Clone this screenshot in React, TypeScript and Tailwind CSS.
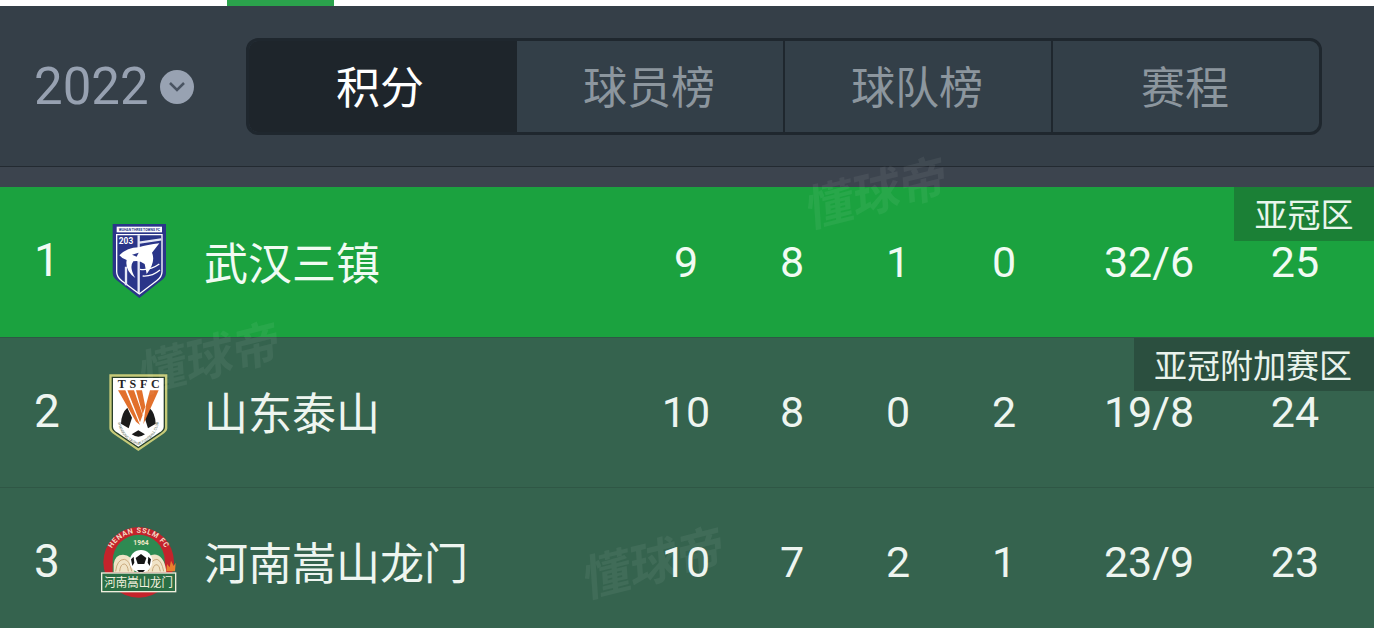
import React from 'react';

const cjk = "font-['Roboto','Noto_Sans_CJK_SC',sans-serif]";

function WuhanLogo() {
  return (
    <svg width="100" height="100" viewBox="0 0 300 300" className="ml-[2px] mb-[5px] shrink-0">
      <path d="M68 42 H228 V190 Q228 205 205 218 L148 264 L90 218 Q68 205 68 190 Z" fill="#2a3589" />
      <rect x="80" y="50" width="136" height="17" fill="#fff" />
      <text x="148" y="63" textAnchor="middle" fontSize="13" fontWeight="700" fill="#2a3589" fontFamily="Roboto, sans-serif" textLength="124" lengthAdjust="spacingAndGlyphs">WUHAN THREE TOWNS FC</text>
      <path d="M80 74 H216 V185 Q216 200 200 212 L148 252 L95 212 Q80 200 80 185 Z" fill="none" stroke="#fff" strokeWidth="4" />
      <text x="108" y="103" textAnchor="middle" fontSize="25" fontWeight="700" fill="#fff" fontFamily="Roboto, sans-serif">203</text>
      <path d="M146 76 V250 M108 170 V226 M148 98 L214 88" stroke="#e4e7f5" strokeWidth="7" fill="none" />
      <path d="M88 136 Q112 112 146 112 Q172 104 208 100 L186 128 Q198 156 170 192 L164 162 Q148 150 130 154 Q116 172 136 204 Q104 182 110 150 Q98 148 88 136 Z" fill="#fff" />
      <path d="M126 134 L146 128 L140 140 Z" fill="#2a3589" />
      <path d="M150 178 Q180 182 208 162 M158 198 Q186 200 210 180" stroke="#fff" strokeWidth="4" fill="none" />
    </svg>
  );
}

function TaishanLogo() {
  return (
    <svg width="100" height="95" viewBox="0 0 300 285" className="ml-[2px] shrink-0">
      <path d="M58 28 H232 V190 Q232 200 215 210 L145 258 L75 210 Q58 200 58 190 Z" fill="#c6ca78" />
      <path d="M65 35 H225 V187 Q225 197 210 206 L145 250 L80 206 Q65 197 65 187 Z" fill="#28402c" />
      <path d="M69 39 H221 V185 Q221 195 207 203 L145 245 L83 203 Q69 195 69 185 Z" fill="#fff" />
      <text x="146" y="68" textAnchor="middle" fontSize="36" fontWeight="700" fill="#222" fontFamily="'Liberation Serif', serif" textLength="126">TSFC</text>
      <circle cx="145" cy="165" r="52" fill="#fff" />
      <path d="M112 128 Q94 144 93 176 L116 190 L126 158 Z M178 128 Q196 144 197 176 L174 190 L164 158 Z M125 208 L145 196 L165 208 Q145 222 125 208 Z" fill="#1b1b1b" />
      <path d="M84 76 H106 L150 180 L138 170 Z M112 76 H132 L158 150 L150 172 Z M138 76 H156 L166 125 L158 148 Z M206 76 H180 L168 120 L160 178 Z" fill="#e2702c" />
      <path id="ts-arc" d="M84 170 Q90 220 145 240 Q200 220 206 170" fill="none" />
      <text fontSize="11" fill="#5a6a55" fontFamily="Roboto, sans-serif">
        <textPath href="#ts-arc" startOffset="50%" textAnchor="middle">SHANDONG TAISHAN FOOTBALL CLUB</textPath>
      </text>
    </svg>
  );
}

function HenanLogo() {
  return (
    <svg width="100" height="95" viewBox="0 0 300 285" className="ml-[4px] mb-[3px] shrink-0">
      <circle cx="143" cy="145" r="106" fill="#c4232b" />
      <path d="M65 175 V140 A78 78 0 0 1 221 140 V175 Z" fill="#2e8a52" />
      <path d="M68 175 V150 Q72 122 96 122 Q122 124 130 150 V175 Z M162 175 V150 Q172 118 196 122 Q222 130 226 175 Z" fill="#f0e3c6" />
      <path d="M74 172 Q78 136 100 136 Q116 138 122 172 M86 172 Q88 150 100 150 Q110 152 112 172 M172 172 Q178 136 198 136 Q212 140 218 172 M184 172 Q186 152 198 152 Q206 154 208 172" fill="none" stroke="#c9a97c" strokeWidth="3" />
      <path d="M226 172 L228 150 L236 160 L240 140 L248 156 L254 146 L252 172 Z" fill="#e8802e" />
      <circle cx="150" cy="142" r="34" fill="#fff" />
      <path d="M150 120 L166 132 L160 150 H140 L134 132 Z M120 136 L128 128 L130 146 L124 156 Z M180 136 L172 128 L170 146 L176 156 Z M138 168 H162 L156 175 H144 Z" fill="#151515" />
      <rect x="32" y="177" width="222" height="56" fill="#2a6e44" stroke="#efeedd" strokeWidth="4" />
      <text x="143" y="219" textAnchor="middle" fontSize="36" fill="#f4f1df" fontFamily="'Noto Sans CJK SC', sans-serif" textLength="206" lengthAdjust="spacingAndGlyphs">河南嵩山龙门</text>
      <text x="150" y="92" textAnchor="middle" fontSize="20" fontWeight="700" fill="#f0e8c8" fontFamily="Roboto, sans-serif">1964</text>
      <path id="hn-arc" d="M52 135 A92 92 0 0 1 234 135" fill="none" />
      <text fontSize="22" fontWeight="700" fill="#f3d8c4" fontFamily="Roboto, sans-serif" letterSpacing="2">
        <textPath href="#hn-arc" startOffset="50%" textAnchor="middle">HENAN SSLM FC</textPath>
      </text>
    </svg>
  );
}

function Watermark({ className }: { className: string }) {
  return (
    <span className={`absolute -rotate-[14deg] -skew-x-[10deg] text-[48px] font-bold leading-none text-white/[0.06] ${className}`}>
      懂球帝
    </span>
  );
}

const rows = [
  { rank: 1, name: '武汉三镇', logo: <WuhanLogo />, stats: ['9', '8', '1', '0', '32/6', '25'] },
  { rank: 2, name: '山东泰山', logo: <TaishanLogo />, stats: ['10', '8', '0', '2', '19/8', '24'] },
  { rank: 3, name: '河南嵩山龙门', logo: <HenanLogo />, stats: ['10', '7', '2', '1', '23/9', '23'] },
];

const statWidths = ['w-[106px]', 'w-[106px]', 'w-[106px]', 'w-[106px]', 'w-[184px]', 'w-[108px]'];

export default function App() {
  const tabs = ['球员榜', '球队榜', '赛程'];

  return (
    <div className={`relative h-[628px] w-[1374px] overflow-hidden bg-[#35634e] ${cjk}`}>
      {/* top strip */}
      <div className="h-[6px] bg-white pl-[227px]">
        <div className="h-full w-[107px] bg-[#2ba24c]" />
      </div>

      {/* season + tabs */}
      <div className="flex h-[161px] items-start border-b border-[#232a31] bg-[#353f48] pl-[34px] pt-[32px]">
        <div className="flex h-[97px] w-[212px] items-center">
          <span className="text-[51px] leading-none text-[#97a1b1]">2022</span>
          <span className="ml-[11px] flex h-[34px] w-[34px] items-center justify-center rounded-full bg-[#98a2b2]">
            <svg width="18" height="12" viewBox="0 0 18 12" fill="none" stroke="#4a5462" strokeWidth="2.5">
              <path d="M2 2 L9 9 L16 2" />
            </svg>
          </span>
        </div>
        <div className="flex h-[97px] w-[1076px] overflow-hidden rounded-xl border-[3px] border-[#1f272e] bg-[#333f48]">
          <div className="flex w-[268px] items-center justify-center bg-[#1e252b] pr-[6px] pt-[5px] text-[44px] text-white">积分</div>
          {tabs.map((tab, i) => (
            <div
              key={tab}
              className={`flex items-center justify-center pr-[2px] pt-[5px] text-[44px] text-[#8c969e] ${
                i < 2 ? 'w-[268px] border-r-2 border-[#1f272e]' : 'flex-1'
              }`}
            >
              {tab}
            </div>
          ))}
        </div>
      </div>

      <div className="h-[20px] bg-[#3c444e]" />

      {rows.map((row, i) => (
        <div
          key={row.rank}
          className={`relative flex h-[150px] items-center text-[43px] ${
            i === 0 ? 'bg-[#1ba23f] text-[#f1fbf3]' : 'border-t border-[#2f5745] bg-[#35634e] text-[#eef5f0]'
          }`}
        >
          <div className="w-[94px] pb-[3px] text-center text-[46px]">{row.rank}</div>
          <div className="flex w-[90px] justify-center">{row.logo}</div>
          <div className="ml-[20px] w-[429px] pt-[5px] text-[44px] leading-none">{row.name}</div>
          {row.stats.map((s, j) => (
            <div key={j} className={`${statWidths[j]} text-center`}>
              {s}
            </div>
          ))}
          {i === 0 && (
            <div className="absolute right-0 top-0 flex h-[54px] w-[140px] items-center justify-center pt-[3px] text-[33px] leading-none text-[#e9f6ec] bg-[#1b8036]">
              亚冠区
            </div>
          )}
          {i === 1 && (
            <div className="absolute right-0 top-0 flex h-[53px] w-[240px] items-center justify-center pr-[2px] pt-[3px] text-[33px] leading-none text-[#e9f3ec] bg-[#2b4f3f]">
              亚冠附加赛区
            </div>
          )}
        </div>
      ))}

      <Watermark className="left-[805px] top-[170px]" />
      <Watermark className="left-[138px] top-[335px]" />
      <Watermark className="left-[582px] top-[540px]" />
    </div>
  );
}
